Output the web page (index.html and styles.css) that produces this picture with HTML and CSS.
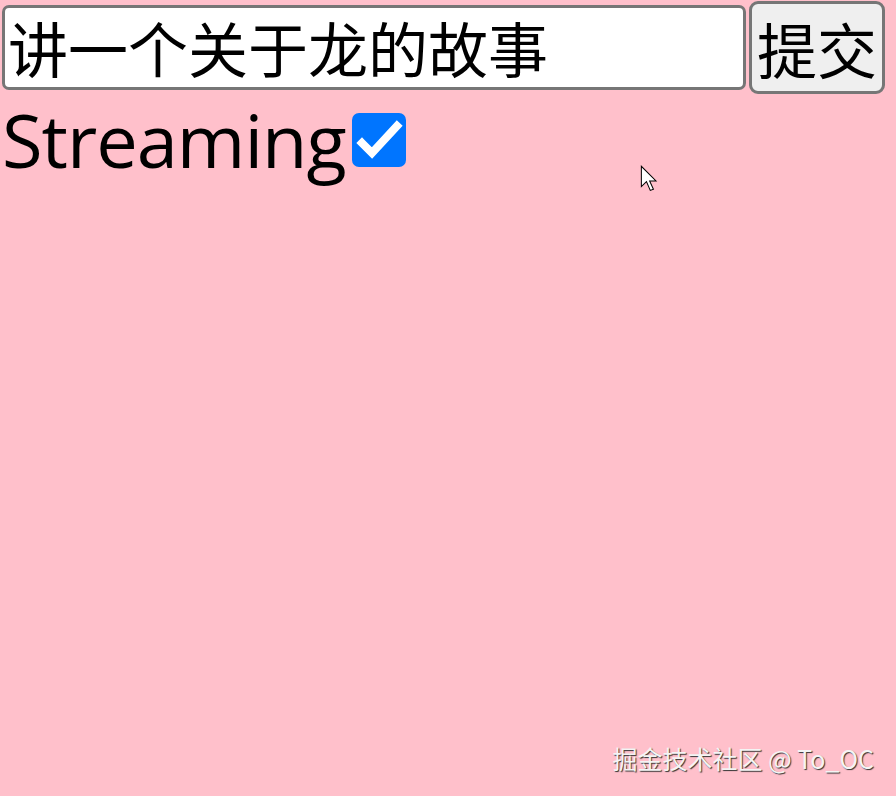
FILE: index.html
```html
<!DOCTYPE html>
<html lang="zh">
<head>
<meta charset="utf-8">
<link rel="stylesheet" href="styles.css">
</head>
<body>
<div class="page">
  <form class="ask">
    <input class="prompt" type="text" value="讲一个关于龙的故事">
    <button class="submit" type="button">提交</button>
  </form>
  <div class="stream-row">
    <span class="stream-label">Streaming</span>
    <span class="check">
      <svg viewBox="0 0 54 54" width="54" height="54"><path d="M10 30 L20 40 L45 13" fill="none" stroke="#fff" stroke-width="8" stroke-linecap="square"/></svg>
    </span>
  </div>
</div>
<svg class="cursor" viewBox="0 0 14 22" width="18" height="28"><path d="M1 1 L1 17 L5 13 L8 20 L10.5 19 L7.5 12.5 L12.5 12.5 Z" fill="#fff" stroke="#000" stroke-width="0.8" stroke-linejoin="miter"/></svg>
<div class="watermark">掘金技术社区 @ To_OC</div>
</body>
</html>
```
FILE: styles.css
```css
html, body {
  margin: 0;
  padding: 0;
  background: #ffc0cb;
  height: 100%;
}
body {
  font-family: "Noto Sans", "Noto Sans CJK SC", sans-serif;
  position: relative;
  overflow: hidden;
}
.page {
  padding: 1px 0 0 2px;
}
.ask {
  display: flex;
  align-items: center;
  gap: 3px;
  margin: 0;
}
.prompt {
  box-sizing: border-box;
  width: 744px;
  height: 85px;
  border: 3px solid #767676;
  border-radius: 7px;
  background: #fff;
  padding: 0 0 3px 3px;
  font-family: "Noto Sans CJK SC", sans-serif;
  font-size: 60px;
  color: #000;
  outline: none;
}
.submit {
  box-sizing: border-box;
  width: 136px;
  height: 93px;
  border: 3px solid #767676;
  border-radius: 9px;
  background: #efefef;
  padding: 0 0 3px 0;
  font-family: "Noto Sans CJK SC", sans-serif;
  font-size: 60px;
  color: #000;
}
.stream-row {
  display: flex;
  align-items: center;
  margin-top: 3px;
}
.stream-label {
  font-family: "Open Sans", "Noto Sans", sans-serif;
  font-size: 74px;
  line-height: 86px;
  color: #000;
  letter-spacing: -1px;
}
.check {
  display: block;
  width: 54px;
  height: 54px;
  border-radius: 7px;
  background: #0075ff;
  margin-left: 6px;
  margin-top: 0;
}
.check svg {
  display: block;
}
.cursor {
  position: absolute;
  left: 640px;
  top: 165px;
}
.watermark {
  position: absolute;
  right: 22px;
  bottom: 20px;
  font-family: "Noto Sans CJK SC", sans-serif;
  font-size: 25px;
  color: #f4f4f4;
  text-shadow: 1px 1px 1px #333;
}
```
